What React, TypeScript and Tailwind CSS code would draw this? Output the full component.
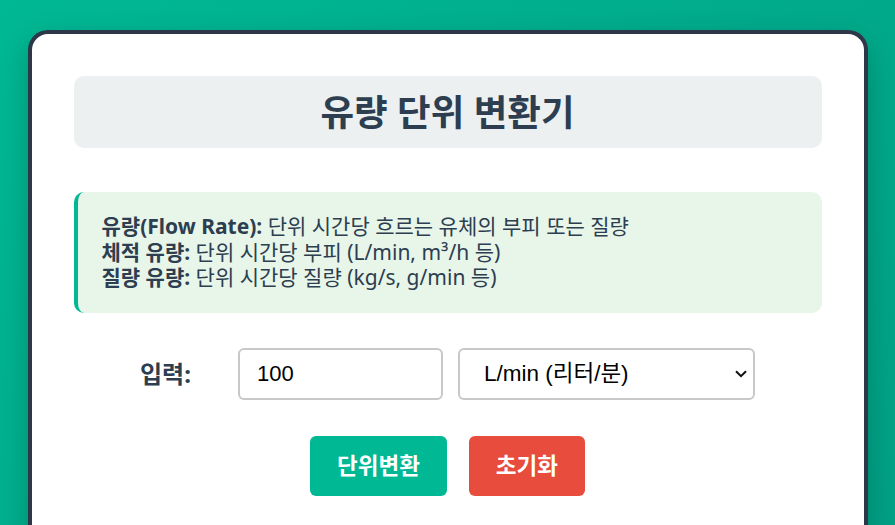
import { useState } from "react";

const units = [
  "L/min (리터/분)",
  "L/s (리터/초)",
  "m³/h (세제곱미터/시)",
  "kg/s (킬로그램/초)",
  "g/min (그램/분)",
];

export default function App() {
  const [value, setValue] = useState("100");
  const [unit, setUnit] = useState(units[0]);

  return (
    <div
      className="min-h-[525px] bg-[linear-gradient(135deg,#00b894_0%,#00a085_100%)] px-[27px] pt-[30px]"
      style={{ fontFamily: '"Noto Sans", "Noto Sans CJK KR", sans-serif' }}
    >
      <div className="mx-auto min-h-[520px] max-w-[840px] rounded-t-[20px] border-[4px] border-b-0 border-[#2d3748] bg-white px-[42px] pt-[42px] shadow-[0_10px_30px_rgba(0,0,0,0.2)]">
        <div className="flex h-[72px] items-center justify-center rounded-[10px] bg-[#ecf0f1]">
          <h1 className="text-[36.5px] font-bold text-[#2c3e50]">유량 단위 변환기</h1>
        </div>

        <div className="mt-[44px] rounded-[10px] border-l-[4px] border-[#00b894] bg-[#e8f5e9] px-[24px] py-[22px] text-[21px] leading-[25.5px] text-[#2c3e50]">
          <p>
            <strong>유량(Flow Rate):</strong> 단위 시간당 흐르는 유체의 부피 또는 질량
          </p>
          <p>
            <strong>체적 유량:</strong> 단위 시간당 부피 (L/min, m³/h 등)
          </p>
          <p>
            <strong>질량 유량:</strong> 단위 시간당 질량 (kg/s, g/min 등)
          </p>
        </div>

        <div className="mt-[35px] flex items-center justify-center gap-[15px]">
          <label className="w-[83px] text-[24px] font-bold text-[#2c3e50]">입력:</label>
          <input
            value={value}
            onChange={(e) => setValue(e.target.value)}
            className="h-[52px] w-[205px] rounded-[6px] border-2 border-[#c8c8c8] px-[17px] text-[22px] text-black outline-none"
            style={{ fontFamily: '"Liberation Sans", "Noto Sans CJK KR", sans-serif' }}
          />
          <div className="relative">
            <select
              value={unit}
              onChange={(e) => setUnit(e.target.value)}
              className="h-[52px] w-[297px] appearance-none rounded-[6px] border-2 border-[#c8c8c8] bg-white pl-[24px] pr-[40px] text-[22.5px] text-black outline-none"
              style={{ fontFamily: '"Liberation Sans", "Noto Sans CJK KR", sans-serif' }}
            >
              {units.map((u) => (
                <option key={u}>{u}</option>
              ))}
            </select>
            <svg
              className="pointer-events-none absolute right-[8px] top-[22px]"
              width="12"
              height="8"
              viewBox="0 0 12 8"
              fill="none"
            >
              <path d="M1 1.2 6 6.2 11 1.2" stroke="#111" strokeWidth="2" />
            </svg>
          </div>
        </div>

        <div className="mt-[36px] flex justify-center gap-[22px]">
          <button className="h-[60px] rounded-[6px] bg-[#00b894] px-[27px] text-[22.5px] font-bold text-white">
            단위변환
          </button>
          <button className="h-[60px] rounded-[6px] bg-[#e74c3c] px-[27px] text-[22.5px] font-bold text-white">
            초기화
          </button>
        </div>
      </div>
    </div>
  );
}
